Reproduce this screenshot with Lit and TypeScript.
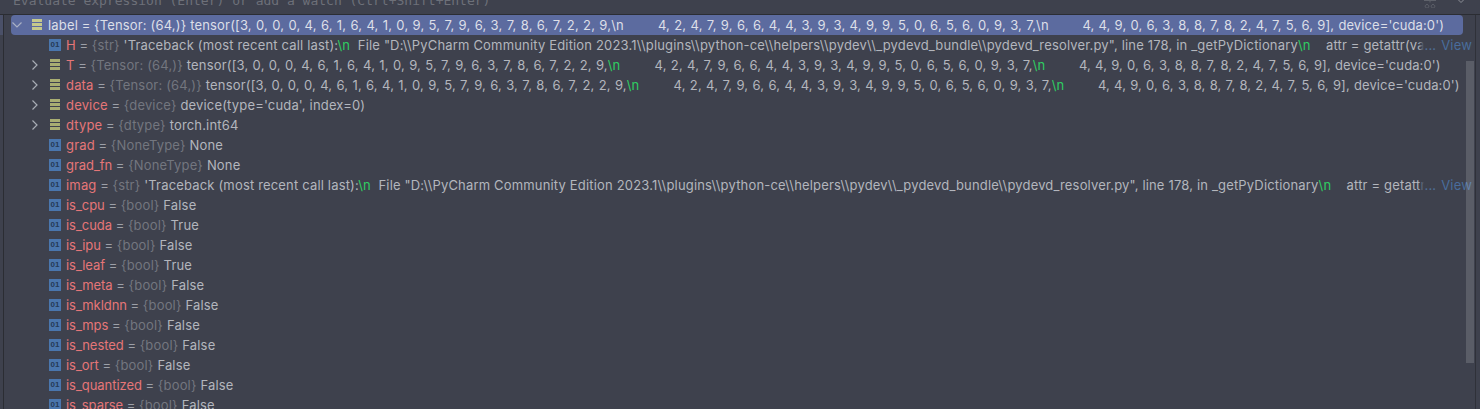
import { LitElement, html, css, nothing } from "lit";
import { customElement } from "lit/decorators.js";

const L1 = "[3, 0, 0, 0, 4, 6, 1, 6, 4, 1, 0, 9, 5, 7, 9, 6, 3, 7, 8, 6, 7, 2, 2, 9,";
const L2 = "        4, 2, 4, 7, 9, 6, 6, 4, 4, 3, 9, 3, 4, 9, 9, 5, 0, 6, 5, 6, 0, 9, 3, 7,";
const L3 = "        4, 4, 9, 0, 6, 3, 8, 8, 7, 8, 2, 4, 7, 5, 6, 9], device='cuda:0')";
const nl = html`<span class="nl">\\n</span>`;
const tensor = html`<span class="num">tensor(${L1}${nl}${L2}${nl}<span class="tail">${L3}</span></span>`;
const tb = (esc: any) =>
  html`'Traceback (most recent call last):${nl}  File "D:\\\\PyCharm Community Edition 2023.1\\\\plugins\\\\python-ce\\\\helpers\\\\pydev\\\\_pydevd_bundle\\\\pydevd_resolver.py", line 178, in _getPyDictionary${nl}    attr = ${esc}`;

type Row = { n: string; t: string; v: any; kind: "arr" | "prim"; exp?: boolean; more?: boolean };
const b = (n: string, v: string): Row => ({ n, t: "bool", v, kind: "prim" });
const rows: Row[] = [
  { n: "H", t: "str", v: tb("getattr(var, attr)"), kind: "prim", more: true },
  { n: "T", t: "Tensor: (64,)", v: tensor, kind: "arr", exp: true },
  { n: "data", t: "Tensor: (64,)", v: tensor, kind: "arr", exp: true },
  { n: "device", t: "device", v: "device(type='cuda', index=0)", kind: "arr", exp: true },
  { n: "dtype", t: "dtype", v: "torch.int64", kind: "arr", exp: true },
  { n: "grad", t: "NoneType", v: "None", kind: "prim" },
  { n: "grad_fn", t: "NoneType", v: "None", kind: "prim" },
  { n: "imag", t: "str", v: tb("getattr(var, attr)"), kind: "prim", more: true },
  b("is_cpu", "False"),
  b("is_cuda", "True"),
  b("is_ipu", "False"),
  b("is_leaf", "True"),
  b("is_meta", "False"),
  b("is_mkldnn", "False"),
  b("is_mps", "False"),
  b("is_nested", "False"),
  b("is_ort", "False"),
  b("is_quantized", "False"),
  b("is_sparse", "False"),
];

const chev = (down: boolean) =>
  down
    ? html`<svg class="ico" width="10" height="6" viewBox="0 0 10 6"><path d="M.5.5L5 5 9.5.5" fill="none" stroke="#a9b0c4" stroke-width="1.2"/></svg>`
    : html`<svg class="ico" width="6" height="10" viewBox="0 0 6 10"><path d="M.5.5L5 5 .5 9.5" fill="none" stroke="#a8adb5" stroke-width="1.2"/></svg>`;
const arr = () =>
  html`<svg class="ico bars" width="10" height="11" viewBox="0 0 10 11"><rect y="0" width="10" height="3"/><rect y="4" width="10" height="3"/><rect y="8" width="10" height="3"/></svg>`;
const prim = () => html`<span class="prim">01</span>`;

@customElement("app-root")
export class AppRoot extends LitElement {
  static styles = css`
    :host { display: block; position: relative; width: 1480px; height: 409px; overflow: hidden; background: #3e414d;
      font-family: Inter, "Noto Sans", sans-serif; font-size: 13px; letter-spacing: 0.17px; color: #b3b6bd; }
    .top { height: 14px; border-bottom: 1px solid #2b2d33; overflow: hidden; display: flex; justify-content: space-between; }
    .hint { font-family: "DejaVu Sans Mono", monospace; font-size: 13px; letter-spacing: 0; line-height: 13px; margin: -6px 0 0 13px; color: #6d7079; white-space: pre; }
    .tools { display: flex; gap: 20px; margin: -1px 15px 0 0; align-items: flex-start; }
    .tools svg { display: block; }
    .body { display: flex; height: 394px; }
    .gutter { width: 3px; border-right: 1px solid #2b2d33; flex: none; }
    .gutter i { display: block; height: 20px; background: #4a5068; }
    .list { flex: 1; min-width: 0; padding-left: 7px; }
    .edge { flex: none; width: 1px; margin-right: 4px; background: #2f3139; }
    .row { height: 20px; display: flex; align-items: center; white-space: pre; position: relative; overflow: hidden; }
    .head { width: 1452px; background: #5c6b9f; border-radius: 4px; color: #dcdfe8; }
    .head .name, .head .type, .head .eq, .head .nl { color: #dcdfe8; }
    .sub { box-sizing: border-box; padding-left: 21px; width: 1461px; }
    .slot { width: 6px; flex: none; display: flex; align-items: center; justify-content: center; }
    .head .slot { width: 11px; }
    .ic { width: 28px; flex: none; box-sizing: border-box; padding-left: 11px; display: flex; align-items: center; }
    .head .ic { width: 26px; padding-left: 10px; }
    .ic .bars { margin-left: 1px; margin-top: -1px; }
    .head .ic .bars { margin-left: 0; fill: #c5c98c; }
    .prim { width: 12px; height: 12px; background: #4a76ad; color: #263a57; font: 700 8px/12px "Liberation Sans", sans-serif; letter-spacing: 0; text-align: center; display: block; }
    .ico { display: block; }
    .bars { fill: #a8ad72; }
    .name { color: #e57678; }
    .name.us { letter-spacing: -0.05px; }
    .eq { color: #9da0a8; letter-spacing: 0; }
    .type { color: #73767f; }
    .val { color: inherit; }
    .num { letter-spacing: 0.16px; word-spacing: 0.45px; }
    .tail { letter-spacing: 0.1px; }
    .nl { color: #2fce62; }
    .txt { overflow: hidden; flex: 1; min-width: 0; }
    .fade { position: absolute; right: 0; top: 0; height: 20px; display: flex; align-items: center;
      background: linear-gradient(90deg, transparent, #3e414d 6px); padding-left: 6px; }
    .dots { color: #4f6f99; }
    .view { color: #496d9c; margin-left: 5px; }
    .thumb { position: absolute; right: 6px; top: 61px; width: 8px; height: 302px; background: rgba(255, 255, 255, 0.15); }
  `;
  render() {
    return html`
      <div class="top">
        <div class="hint">Evaluate expression (Enter) or add a watch (Ctrl+Shift+Enter)</div>
        <div class="tools">
          <svg width="14" height="9" viewBox="0 0 14 9"><path d="M1 1.5h12M7 0v3.5M4 5.5a1.8 1.8 0 1 0 .01 0M10 5.5a1.8 1.8 0 1 0 .01 0" fill="none" stroke="#5f626b"/></svg>
          <svg width="8" height="5" viewBox="0 0 8 5"><path d="M.5 0L4 3.5 7.5 0" fill="none" stroke="#8b8e96"/></svg>
        </div>
      </div>
      <div class="body">
        <div class="gutter"><i></i></div>
        <div class="list">
          <div class="row head">
            <span class="slot">${chev(true)}</span>
            <span class="ic">${arr()}</span>
            <span class="txt"><span class="name">label</span><span class="eq"> = </span><span class="type">{Tensor: (64,)}</span> <span class="val">${tensor}</span></span>
          </div>
          ${rows.map(
            (r) => html`<div class="row sub">
              <span class="slot">${r.exp ? chev(false) : nothing}</span>
              <span class="ic">${r.kind === "arr" ? arr() : prim()}</span>
              <span class="txt"><span class="name ${r.n.includes("_") ? "us" : ""}">${r.n}</span><span class="eq"> = </span><span class="type">{${r.t}}</span> <span class="val">${r.v}</span></span>
              ${r.more ? html`<span class="fade"><span class="dots">...</span><span class="view">View</span></span>` : nothing}
            </div>`
          )}
        </div>
        <div class="edge"></div>
        <div class="thumb"></div>
      </div>`;
  }
}
